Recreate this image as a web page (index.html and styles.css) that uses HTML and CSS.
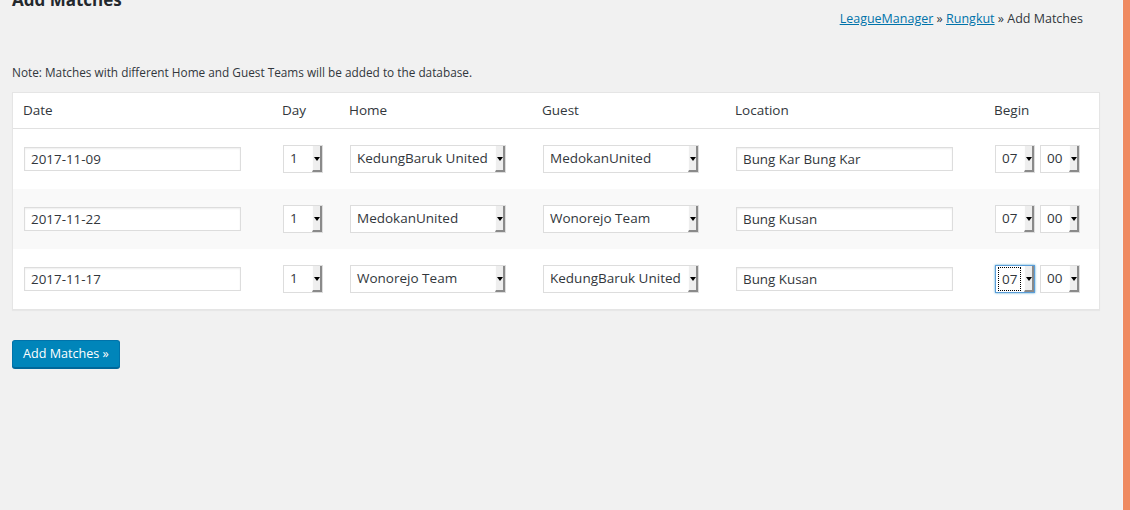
FILE: index.html
```html
<!DOCTYPE html>
<html lang="en">
<head>
<meta charset="utf-8">
<title>Add Matches</title>
<link rel="stylesheet" href="styles.css">
</head>
<body>
<div class="page">
  <div class="main">
    <div class="header">
      <h2 class="title">Add Matches</h2>
      <p class="breadcrumb"><a href="#">LeagueManager</a> &raquo; <a href="#">Rungkut</a> &raquo; Add Matches</p>
    </div>
    <p class="note">Note: Matches with different Home and Guest Teams will be added to the database.</p>
    <table class="widefat">
      <colgroup>
        <col class="c-date"><col class="c-day"><col class="c-team"><col class="c-team"><col class="c-loc"><col class="c-begin">
      </colgroup>
      <thead>
        <tr><th>Date</th><th>Day</th><th>Home</th><th>Guest</th><th>Location</th><th>Begin</th></tr>
      </thead>
      <tbody>
        <tr>
          <td><span class="input w-wide">2017-11-09</span></td>
          <td><span class="select w-small"><span class="val">1</span><span class="arrow"></span></span></td>
          <td><span class="select w-team"><span class="val">KedungBaruk United</span><span class="arrow"></span></span></td>
          <td><span class="select w-team"><span class="val">MedokanUnited</span><span class="arrow"></span></span></td>
          <td><span class="input w-wide">Bung Kar Bung Kar</span></td>
          <td><div class="time"><span class="select w-small"><span class="val">07</span><span class="arrow"></span></span><span class="select w-small"><span class="val">00</span><span class="arrow"></span></span></div></td>
        </tr>
        <tr class="alt">
          <td><span class="input w-wide">2017-11-22</span></td>
          <td><span class="select w-small"><span class="val">1</span><span class="arrow"></span></span></td>
          <td><span class="select w-team"><span class="val">MedokanUnited</span><span class="arrow"></span></span></td>
          <td><span class="select w-team"><span class="val">Wonorejo Team</span><span class="arrow"></span></span></td>
          <td><span class="input w-wide">Bung Kusan</span></td>
          <td><div class="time"><span class="select w-small"><span class="val">07</span><span class="arrow"></span></span><span class="select w-small"><span class="val">00</span><span class="arrow"></span></span></div></td>
        </tr>
        <tr>
          <td><span class="input w-wide">2017-11-17</span></td>
          <td><span class="select w-small"><span class="val">1</span><span class="arrow"></span></span></td>
          <td><span class="select w-team"><span class="val">Wonorejo Team</span><span class="arrow"></span></span></td>
          <td><span class="select w-team"><span class="val">KedungBaruk United</span><span class="arrow"></span></span></td>
          <td><span class="input w-wide">Bung Kusan</span></td>
          <td><div class="time"><span class="select w-small focused"><span class="val"><span class="ring">07</span></span><span class="arrow"></span></span><span class="select w-small"><span class="val">00</span><span class="arrow"></span></span></div></td>
        </tr>
      </tbody>
    </table>
    <button class="button-primary" type="button">Add Matches &raquo;</button>
  </div>
  <div class="edge"></div>
</div>
</body>
</html>
```
FILE: styles.css
```css
* { box-sizing: border-box; }
html, body { margin: 0; padding: 0; }
body {
  background: #f1f1f1;
  color: #32373c;
  font-family: "Open Sans", "Noto Sans", sans-serif;
  font-size: 13px;
  overflow: hidden;
}
.page {
  display: flex;
  min-height: 510px;
}
.main {
  width: 1122px;
  padding: 0 22px 0 12px;
}
.edge {
  width: 1px;
  background: #f4f4f4;
}
.page::after {
  content: "";
  width: 7px;
  background: #ef8a60;
}
.header {
  display: flex;
  justify-content: space-between;
  align-items: flex-start;
  height: 40px;
}
.title {
  margin: -12px 0 0;
  font-size: 17px;
  line-height: 24px;
  font-weight: 700;
  color: #23282d;
}
.breadcrumb {
  margin: 9px 17px 0 0;
  line-height: 20px;
  font-size: 12.5px;
}
.breadcrumb a { color: #0073aa; }
.note {
  margin: 22px 0 0;
  line-height: 20px;
  font-size: 11.8px;
}
.widefat {
  margin-top: 10px;
  width: 1088px;
  table-layout: fixed;
  border-collapse: separate;
  border-spacing: 0;
  border: 1px solid #e5e5e5;
  background: #fff;
  box-shadow: 0 1px 1px rgba(0,0,0,.04);
}
.c-date { width: 259px; }
.c-day { width: 67px; }
.c-team { width: 193px; }
.c-loc { width: 259px; }
.c-begin { width: 115px; }
.widefat th {
  height: 36px;
  padding: 0 10px 2px;
  text-align: left;
  font-weight: 400;
  font-size: 13.5px;
  color: #32373c;
  border-bottom: 1px solid #e1e1e1;
}
.widefat td {
  height: 60px;
  padding: 0 10px 0 11px;
  vertical-align: middle;
}
.widefat tr.alt td { background: #f9f9f9; }
.input {
  display: block;
  height: 24px;
  line-height: 22px;
  padding: 0 6px;
  border: 1px solid #ddd;
  box-shadow: inset 0 1px 2px rgba(0,0,0,.07);
  background: #fff;
  font-size: 13.4px;
  color: #32373c;
  white-space: nowrap;
}
.w-wide { width: 217px; }
.w-small { width: 40px; }
.w-team { width: 156px; }
.select {
  display: flex;
  height: 28px;
  border: 1px solid #ddd;
  background: #fff;
  font-size: 13.5px;
  color: #32373c;
}
.select .val {
  flex: 1;
  min-width: 0;
  padding-left: 6px;
  line-height: 25px;
  white-space: nowrap;
  overflow: hidden;
}
.select .arrow {
  width: 10px;
  display: flex;
  align-items: center;
  justify-content: center;
  background: #eeeeee;
  border-left: 1px solid #fdfdfd;
  border-right: 2px solid #8a8a8a;
  border-bottom: 2px solid #8a8a8a;
}
.select .arrow::before {
  content: "";
  border-left: 3px solid transparent;
  border-right: 3px solid transparent;
  border-top: 4px solid #000;
  margin-top: 2px;
}
.time {
  display: flex;
  gap: 5px;
}
.select.focused {
  border-color: #5b9dd9;
  box-shadow: 0 0 2px rgba(30,140,190,.8);
}
.select.focused .val { padding-left: 2px; padding-top: 1px; line-height: 20px; }
.ring {
  display: inline-block;
  padding: 0 3px;
  height: 24px;
  line-height: 22px;
  border: 1px dotted #000;
}
.button-primary {
  margin-top: 30px;
  height: 28px;
  padding: 0 10px 1px;
  background: #0085ba;
  border: 1px solid #0073aa;
  border-bottom-color: #006799;
  border-radius: 3px;
  box-shadow: 0 1px 0 #006799;
  color: #fff;
  font-family: inherit;
  font-size: 12.6px;
  line-height: 26px;
  cursor: pointer;
}
```
